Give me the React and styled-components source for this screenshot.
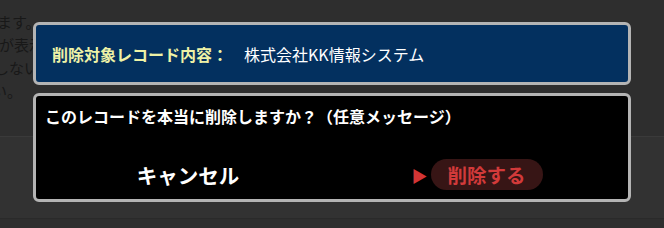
import React from 'react';
import styled, { createGlobalStyle } from 'styled-components';

const GlobalStyle = createGlobalStyle`
  html, body {
    margin: 0;
    padding: 0;
    background: #2e2e2e;
  }
  body {
    font-family: "Noto Sans CJK JP", "Noto Sans", sans-serif;
  }
`;

const Page = styled.div`
  position: relative;
  width: 664px;
  height: 228px;
  overflow: hidden;
  background: #2e2e2e;
`;

const Backdrop = styled.div`
  height: 137px;
  border-bottom: 1px solid #3a3a3a;
  padding-top: 10px;
  box-sizing: border-box;
`;

const Footer = styled.div`
  height: 81px;
  background: #323232;
  border-bottom: 1px solid #2a2a2a;
`;

const BgLine = styled.div`
  font-size: 15px;
  line-height: 23px;
  color: #181818;
  white-space: nowrap;
  margin-left: ${p => p.$shift}px;
`;

const Modal = styled.div`
  position: absolute;
  left: 33px;
  top: 22px;
  width: 598px;
  display: flex;
  flex-direction: column;
  gap: 8px;
`;

const Panel = styled.div`
  box-sizing: border-box;
  border: 3px solid #b4b4b4;
  border-radius: 6px;
  background: ${p => p.$bg};
  height: ${p => p.$h}px;
`;

const InfoRow = styled.div`
  height: 100%;
  display: flex;
  align-items: center;
  padding-left: 16px;
  font-size: 16px;
`;

const Label = styled.span`
  color: #eef2a6;
  font-weight: 700;
  width: 192px;
`;

const Value = styled.span`
  color: #ffffff;
  font-size: 16px;
`;

const Body = styled.div`
  display: flex;
  flex-direction: column;
  height: 100%;
`;

const Question = styled.div`
  color: #ffffff;
  font-weight: 700;
  font-size: 16px;
  line-height: 22px;
  padding: 9px 0 0 9px;
`;

const Actions = styled.div`
  flex: 1;
  display: grid;
  grid-template-columns: 1fr 1fr;
  align-items: end;
  padding-bottom: 9px;
`;

const Slot = styled.div`
  display: flex;
  justify-content: center;
  align-items: center;
  gap: 3px;
  height: 31px;
`;

const CancelButton = styled.button`
  background: none;
  border: none;
  color: #ffffff;
  font-family: inherit;
  font-size: 20.5px;
  font-weight: 700;
  padding: 0;
  margin-left: 8px;
  cursor: pointer;
`;

const Arrow = styled.span`
  color: #d33535;
  font-size: 16px;
  margin-left: -6px;
`;

const DeleteButton = styled.button`
  background: #371515;
  border: none;
  border-radius: 16px;
  color: #d23a3a;
  font-family: inherit;
  font-size: 19.5px;
  font-weight: 700;
  height: 31px;
  width: 112px;
  padding: 0;
  cursor: pointer;
`;

const bgLines = [
  { text: 'ます。', shift: -3 },
  { text: 'が表示されます。', shift: -1 },
  { text: 'しないでください。', shift: -6 },
  { text: 'い。', shift: -8 },
];

export default function App() {
  return (
    <Page>
      <GlobalStyle />
      <Backdrop>
        {bgLines.map((l, i) => (
          <BgLine key={i} $shift={l.shift}>{l.text}</BgLine>
        ))}
      </Backdrop>
      <Footer />
      <Modal>
        <Panel $bg="#03305f" $h={63}>
          <InfoRow>
            <Label>削除対象レコード内容：</Label>
            <Value>株式会社KK情報システム</Value>
          </InfoRow>
        </Panel>
        <Panel $bg="#000000" $h={109}>
          <Body>
            <Question>このレコードを本当に削除しますか？（任意メッセージ）</Question>
            <Actions>
              <Slot>
                <CancelButton>キャンセル</CancelButton>
              </Slot>
              <Slot>
                <Arrow>▶</Arrow>
                <DeleteButton>削除する</DeleteButton>
              </Slot>
            </Actions>
          </Body>
        </Panel>
      </Modal>
    </Page>
  );
}
